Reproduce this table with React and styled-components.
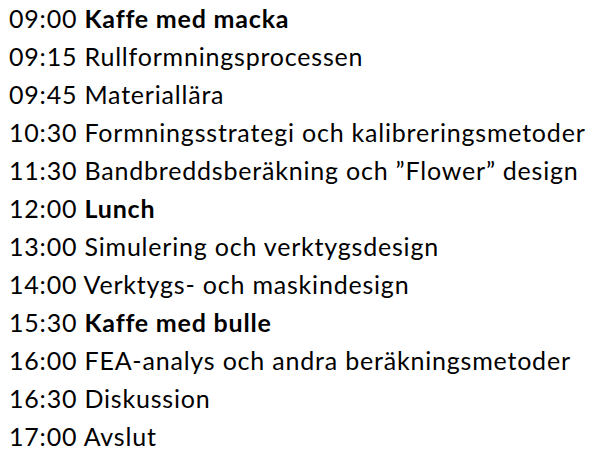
import React from "react";
import styled, { createGlobalStyle } from "styled-components";

const Global = createGlobalStyle`
  html, body { margin: 0; padding: 0; background: #fff; }
`;

const List = styled.ul`
  list-style: none;
  margin: -1px 0 0;
  padding: 0 0 0 9px;
  font-family: Lato, "Open Sans", sans-serif;
  font-size: 25px;
  letter-spacing: 0.8px;
  line-height: 38px;
  color: #000;
`;

const Item = styled.li`
  white-space: nowrap;
`;

const Title = styled.span`
  font-weight: ${(p) => (p.$bold ? 700 : 400)};
`;

const items = [
  ["09:00", "Kaffe med macka", true],
  ["09:15", "Rullformningsprocessen"],
  ["09:45", "Materiallära"],
  ["10:30", "Formningsstrategi och kalibreringsmetoder"],
  ["11:30", "Bandbreddsberäkning och \u201DFlower\u201D design"],
  ["12:00", "Lunch", true],
  ["13:00", "Simulering och verktygsdesign"],
  ["14:00", "Verktygs- och maskindesign"],
  ["15:30", "Kaffe med bulle", true],
  ["16:00", "FEA-analys och andra beräkningsmetoder"],
  ["16:30", "Diskussion"],
  ["17:00", "Avslut"],
];

export default function App() {
  return (
    <>
      <Global />
      <List>
        {items.map(([t, label, bold]) => (
          <Item key={t}>
            {t} <Title $bold={bold}>{label}</Title>
          </Item>
        ))}
      </List>
    </>
  );
}
